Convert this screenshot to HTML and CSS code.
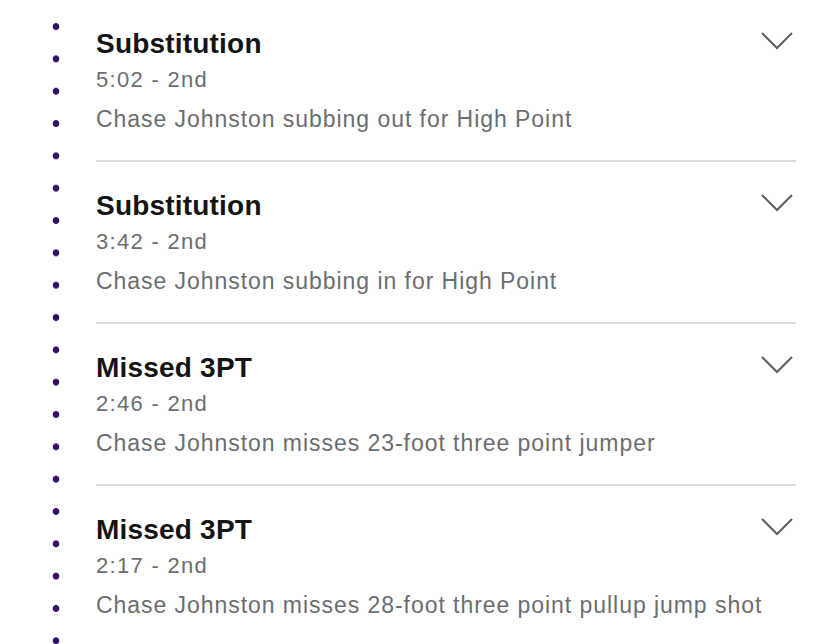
FILE: index.html
```html
<!DOCTYPE html>
<html>
<head>
<meta charset="utf-8">
<link rel="stylesheet" href="styles.css">
</head>
<body>
<div class="page">
  <div class="rail"></div>
  <ul class="feed">
    <li class="play">
      <div class="play-text">
        <div class="play-title">Substitution</div>
        <div class="play-time">5:02 - 2nd</div>
        <div class="play-desc">Chase Johnston subbing out for High Point</div>
      </div>
      <svg class="chev" viewBox="0 0 36 20" width="36" height="20"><polyline points="2,3 17,18 32,3" fill="none" stroke="#5e5e5e" stroke-width="2"/></svg>
    </li>
    <li class="play">
      <div class="play-text">
        <div class="play-title">Substitution</div>
        <div class="play-time">3:42 - 2nd</div>
        <div class="play-desc">Chase Johnston subbing in for High Point</div>
      </div>
      <svg class="chev" viewBox="0 0 36 20" width="36" height="20"><polyline points="2,3 17,18 32,3" fill="none" stroke="#5e5e5e" stroke-width="2"/></svg>
    </li>
    <li class="play">
      <div class="play-text">
        <div class="play-title">Missed 3PT</div>
        <div class="play-time">2:46 - 2nd</div>
        <div class="play-desc">Chase Johnston misses 23-foot three point jumper</div>
      </div>
      <svg class="chev" viewBox="0 0 36 20" width="36" height="20"><polyline points="2,3 17,18 32,3" fill="none" stroke="#5e5e5e" stroke-width="2"/></svg>
    </li>
    <li class="play">
      <div class="play-text">
        <div class="play-title">Missed 3PT</div>
        <div class="play-time">2:17 - 2nd</div>
        <div class="play-desc">Chase Johnston misses 28-foot three point pullup jump shot</div>
      </div>
      <svg class="chev" viewBox="0 0 36 20" width="36" height="20"><polyline points="2,3 17,18 32,3" fill="none" stroke="#5e5e5e" stroke-width="2"/></svg>
    </li>
  </ul>
</div>
</body>
</html>
```
FILE: styles.css
```css
html, body {
  margin: 0;
  padding: 0;
  background: #ffffff;
}
body {
  font-family: "Liberation Sans", Arial, sans-serif;
  width: 828px;
  height: 644px;
  overflow: hidden;
}
.page {
  display: flex;
  align-items: stretch;
  height: 644px;
}
.rail {
  width: 96px;
  flex: 0 0 96px;
  background-image: radial-gradient(circle, #2e1064 3px, rgba(46, 16, 100, 0) 3.7px);
  background-size: 8px 32.33px;
  background-repeat: repeat-y;
  background-position: 51.5px 10.4px;
}
.feed {
  list-style: none;
  margin: 0;
  padding: 0;
  width: 700px;
}
.play {
  display: flex;
  justify-content: space-between;
  align-items: flex-start;
  padding: 27px 0 21px;
  border-bottom: 2px solid #dcdcdc;
}
.play-text {
  flex: 1 1 auto;
  min-width: 0;
  white-space: nowrap;
}
.play-title {
  font-size: 28px;
  line-height: 34px;
  font-weight: 700;
  letter-spacing: 0.2px;
  color: #141414;
}
.play-time {
  font-size: 22px;
  line-height: 38px;
  letter-spacing: 1.3px;
  color: #6c6d6f;
}
.play-desc {
  font-size: 23px;
  line-height: 40px;
  letter-spacing: 0.95px;
  color: #6c6d6f;
}
.chev {
  flex: 0 0 auto;
  margin-top: 3px;
  margin-right: 0;
}
```
